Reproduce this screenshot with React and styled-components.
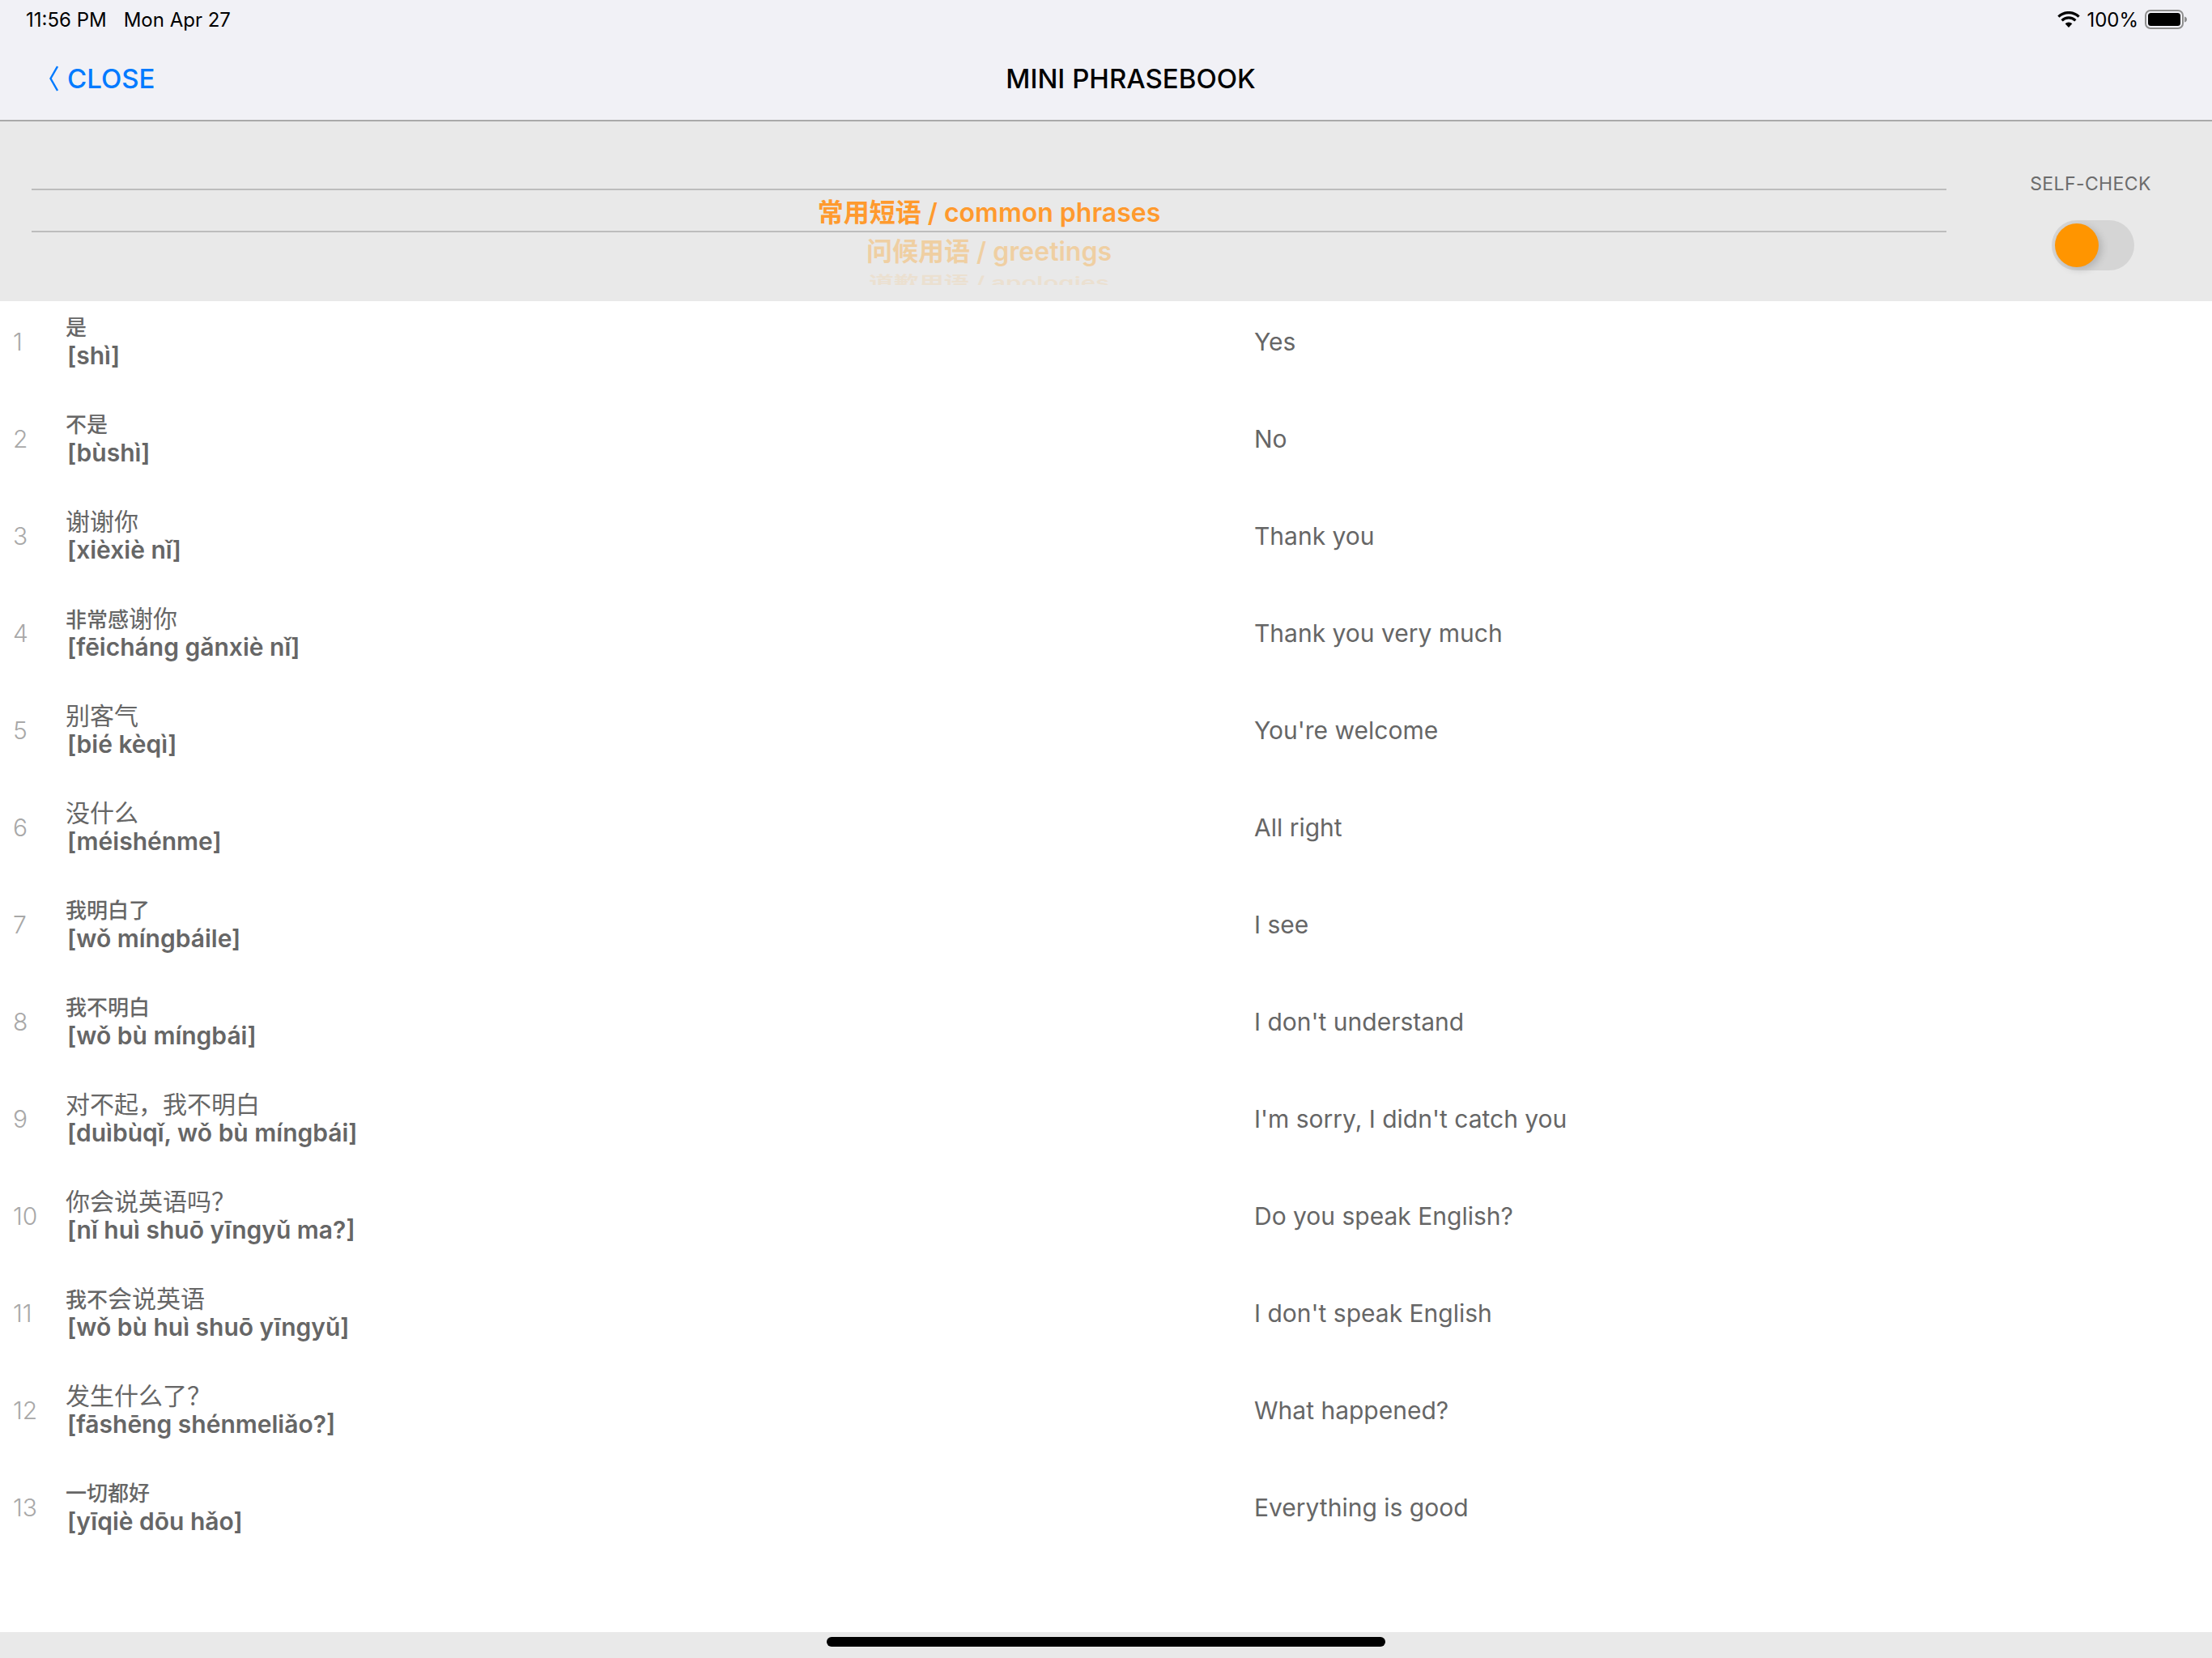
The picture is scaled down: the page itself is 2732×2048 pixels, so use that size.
import { createGlobalStyle, styled } from "styled-components";

const GlobalStyle = createGlobalStyle`
  html, body {
    margin: 0;
    padding: 0;
    background: #fff;
    font-family: Inter, "Noto Sans CJK SC", sans-serif;
  }
`;

const Page = styled.div`
  width: 2732px;
  height: 2048px;
  display: flex;
  flex-direction: column;
  overflow: hidden;
`;

const Header = styled.header`
  height: 148px;
  background: #f1f1f6;
  border-bottom: 2px solid #a9a9a9;
  display: flex;
  flex-direction: column;
`;

const StatusBar = styled.div`
  height: 48px;
  padding: 0 30px 0 32px;
  display: flex;
  align-items: center;
  justify-content: space-between;
  font-size: 24px;
  color: #000;
`;

const StatusLeft = styled.div`
  display: flex;
  gap: 21px;
`;

const StatusRight = styled.div`
  display: flex;
  align-items: center;
  gap: 8px;
`;

const NavBar = styled.nav`
  flex: 1;
  display: grid;
  grid-template-columns: 1fr auto 1fr;
  align-items: center;
  padding: 0 0 2px 61px;
`;

const BackButton = styled.button`
  justify-self: start;
  display: flex;
  align-items: center;
  gap: 11px;
  border: none;
  background: none;
  padding: 0;
  color: #007aff;
  font: 500 33px Inter, sans-serif;
`;

const Title = styled.h1`
  margin: 0;
  font-size: 33px;
  font-weight: 500;
  color: #000;
`;

const PickerBand = styled.section`
  height: 222px;
  background: #e9e9e9;
  display: flex;
`;

const Wheel = styled.div`
  width: 2365px;
  height: 202px;
  margin-left: 39px;
  padding-top: 83px;
  box-sizing: border-box;
  overflow: hidden;
`;

const WheelRow = styled.div`
  display: flex;
  align-items: center;
  justify-content: center;
  height: ${(p) => p.$height}px;
  box-sizing: border-box;
  color: #ff9500;
  opacity: ${(p) => p.$fade};
  transform: scaleY(${(p) => p.$squash});
  font-size: ${(p) => p.$size}px;
  font-weight: 600;
  white-space: pre;
  ${(p) => p.$selected && "border-top: 2px solid #bdbdbd; border-bottom: 2px solid #bdbdbd;"}
`;

const SelectedText = styled.span`
  color: #ff9a2e;
`;

const SideColumn = styled.div`
  flex: 1;
  display: flex;
  flex-direction: column;
  align-items: center;
  padding: 62px 0 0 28px;
`;

const SideLabel = styled.div`
  height: 30px;
  line-height: 30px;
  font-size: 23px;
  color: #6c6c6c;
  letter-spacing: 0.4px;
`;

const SwitchTrack = styled.div`
  width: 102px;
  height: 62px;
  margin: 30px 0 0 6px;
  padding: 4px;
  box-sizing: border-box;
  border-radius: 31px;
  background: #d5d5d5;
`;

const SwitchThumb = styled.div`
  width: 54px;
  height: 54px;
  border-radius: 50%;
  background: #ff9500;
  box-shadow: 4px 3px 10px rgba(0, 0, 0, 0.16);
`;

const List = styled.main`
  flex: 1;
  display: flex;
  flex-direction: column;
  gap: 20px;
  background: #fff;
`;

const Row = styled.div`
  height: 100px;
  display: grid;
  grid-template-columns: 65px 1468px 1fr;
  align-items: center;
  padding-left: 16px;
  color: #666;
`;

const Num = styled.div`
  font-size: 30px;
  font-weight: 300;
  color: #a8a8a8;
`;

const Phrase = styled.div`
  display: flex;
  flex-direction: column;
`;

const Hanzi = styled.div`
  height: 35px;
  line-height: 35px;
  white-space: pre;
`;

const HanziBold = styled.span`
  font-size: 26px;
  font-weight: 500;
`;

const HanziLight = styled.span`
  font-size: 30px;
  font-weight: 400;
`;

const Pinyin = styled.div`
  height: 35px;
  line-height: 35px;
  font-size: 30px;
  font-weight: 600;
  padding-left: 2px;
`;

const English = styled.div`
  font-size: 30px;
  font-weight: 400;
`;

const Footer = styled.footer`
  height: 32px;
  background: #e9e9e9;
  display: flex;
  justify-content: center;
  padding-top: 6px;
  box-sizing: border-box;
`;

const HomeBar = styled.div`
  width: 690px;
  height: 12px;
  border-radius: 6px;
  background: #000;
`;

const phrases = [
  { bold: "是", pinyin: "[shì]", en: "Yes" },
  { bold: "不是", pinyin: "[bùshì]", en: "No" },
  { light: "谢谢你", pinyin: "[xièxiè nǐ]", en: "Thank you" },
  { bold: "非常感", light: "谢你", pinyin: "[fēicháng gǎnxiè nǐ]", en: "Thank you very much" },
  { light: "别客气", pinyin: "[bié kèqì]", en: "You're welcome" },
  { light: "没什么", pinyin: "[méishénme]", en: "All right" },
  { bold: "我明白了", pinyin: "[wǒ míngbáile]", en: "I see" },
  { bold: "我不明白", pinyin: "[wǒ bù míngbái]", en: "I don't understand" },
  { light: "对不起，我不明白", pinyin: "[duìbùqǐ, wǒ bù míngbái]", en: "I'm sorry, I didn't catch you" },
  { light: "你会说英语吗？", pinyin: "[nǐ huì shuō yīngyǔ ma?]", en: "Do you speak English?" },
  { bold: "我不", light: "会说英语", pinyin: "[wǒ bù huì shuō yīngyǔ]", en: "I don't speak English" },
  { light: "发生什么了？", pinyin: "[fāshēng shénmeliǎo?]", en: "What happened?" },
  { bold: "一切都好", pinyin: "[yīqiè dōu hǎo]", en: "Everything is good" },
];

function WifiIcon() {
  return (
    <svg width="28" height="20" viewBox="0 0 28 20">
      <path d="M14 20 L9.6 15.2 A6.4 6.4 0 0 1 18.4 15.2 Z" fill="#000" />
      <path d="M5.6 11.4 A12 12 0 0 1 22.4 11.4" fill="none" stroke="#000" strokeWidth="3.2" />
      <path d="M1.4 6.6 A18.2 18.2 0 0 1 26.6 6.6" fill="none" stroke="#000" strokeWidth="3.2" />
    </svg>
  );
}

function BatteryIcon() {
  return (
    <svg width="53" height="24" viewBox="0 0 53 24">
      <rect x="1" y="1" width="46" height="22" rx="6" fill="none" stroke="#8e8e8e" strokeWidth="2" />
      <rect x="4" y="4" width="40" height="16" rx="3.5" fill="#000" />
      <path d="M49 8.5 C51 9 52 10.4 52 12 C52 13.6 51 15 49 15.5 Z" fill="#8e8e8e" />
    </svg>
  );
}

function BackChevron() {
  return (
    <svg width="11" height="32" viewBox="0 0 11 32">
      <polyline points="10,1 1.5,16 10,31" fill="none" stroke="#007aff" strokeWidth="2.4" />
    </svg>
  );
}

export default function App() {
  return (
    <Page>
      <GlobalStyle />
      <Header>
        <StatusBar>
          <StatusLeft>
            <span>11:56 PM</span>
            <span>Mon Apr 27</span>
          </StatusLeft>
          <StatusRight>
            <WifiIcon />
            <span>100%</span>
            <BatteryIcon />
          </StatusRight>
        </StatusBar>
        <NavBar>
          <BackButton>
            <BackChevron />
            CLOSE
          </BackButton>
          <Title>MINI PHRASEBOOK</Title>
        </NavBar>
      </Header>

      <PickerBand>
        <Wheel>
          <WheelRow $height={54} $fade={1} $squash={1} $size={32} $selected>
            <SelectedText>常用短语 / common phrases</SelectedText>
          </WheelRow>
          <WheelRow $height={42} $fade={0.3} $squash={1} $size={32}>
            问候用语 / greetings
          </WheelRow>
          <WheelRow $height={36} $fade={0.1} $squash={0.65} $size={31}>
            道歉用语 / apologies
          </WheelRow>
        </Wheel>
        <SideColumn>
          <SideLabel>SELF-CHECK</SideLabel>
          <SwitchTrack>
            <SwitchThumb />
          </SwitchTrack>
        </SideColumn>
      </PickerBand>

      <List>
        {phrases.map((item, index) => (
          <Row key={index}>
            <Num>{index + 1}</Num>
            <Phrase>
              <Hanzi>
                {item.bold && <HanziBold>{item.bold}</HanziBold>}
                {item.light && <HanziLight>{item.light}</HanziLight>}
              </Hanzi>
              <Pinyin>{item.pinyin}</Pinyin>
            </Phrase>
            <English>{item.en}</English>
          </Row>
        ))}
      </List>

      <Footer>
        <HomeBar />
      </Footer>
    </Page>
  );
}
